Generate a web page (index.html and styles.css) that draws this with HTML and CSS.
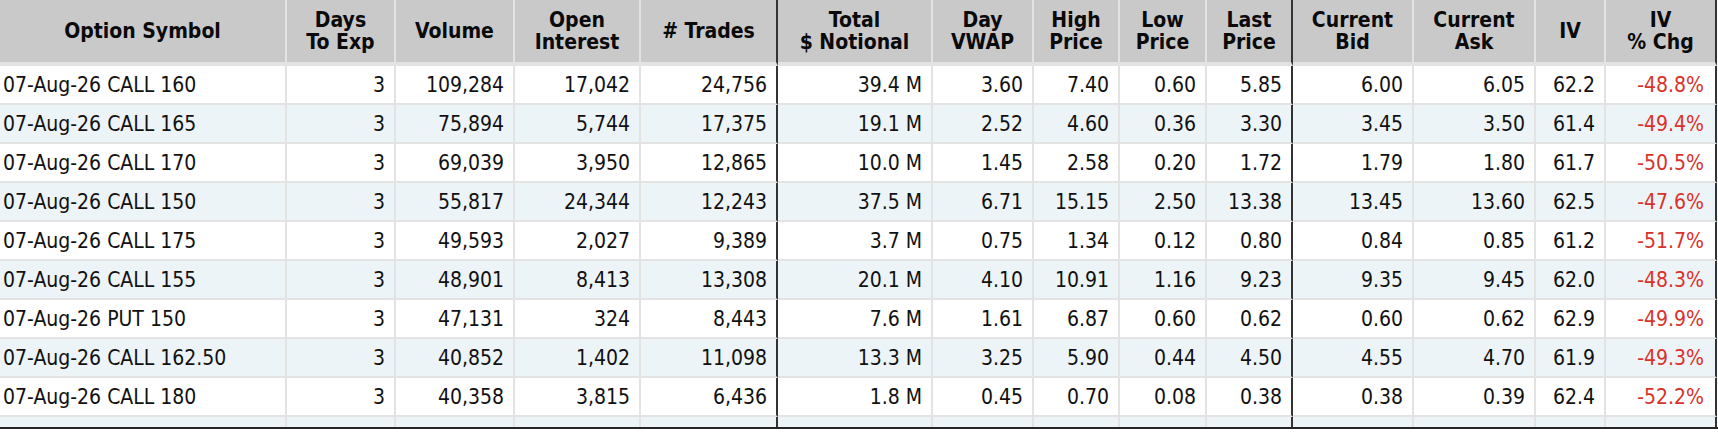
FILE: index.html
```html
<!DOCTYPE html>
<html lang="en">
<head>
<meta charset="utf-8">
<title>Option Activity</title>
<link rel="stylesheet" href="styles.css">
</head>
<body>
<div class="wrap">
<table class="opts">
<thead>
<tr>
<th class="c1">Option Symbol</th>
<th class="c2">Days<br>To Exp</th>
<th class="c3">Volume</th>
<th class="c4">Open<br>Interest</th>
<th class="c5 dk"># Trades</th>
<th class="c6">Total<br>$ Notional</th>
<th class="c7">Day<br>VWAP</th>
<th class="c8">High<br>Price</th>
<th class="c9">Low<br>Price</th>
<th class="c10 dk">Last<br>Price</th>
<th class="c11">Current<br>Bid</th>
<th class="c12">Current<br>Ask</th>
<th class="c13">IV</th>
<th class="c14 dk">IV<br>% Chg</th>
</tr>
</thead>
<tbody>
<tr><td class="sym">07-Aug-26 CALL 160</td><td>3</td><td>109,284</td><td>17,042</td><td class="dk">24,756</td><td>39.4 M</td><td>3.60</td><td>7.40</td><td>0.60</td><td class="dk">5.85</td><td>6.00</td><td>6.05</td><td>62.2</td><td class="dk neg">-48.8%</td></tr>
<tr><td class="sym">07-Aug-26 CALL 165</td><td>3</td><td>75,894</td><td>5,744</td><td class="dk">17,375</td><td>19.1 M</td><td>2.52</td><td>4.60</td><td>0.36</td><td class="dk">3.30</td><td>3.45</td><td>3.50</td><td>61.4</td><td class="dk neg">-49.4%</td></tr>
<tr><td class="sym">07-Aug-26 CALL 170</td><td>3</td><td>69,039</td><td>3,950</td><td class="dk">12,865</td><td>10.0 M</td><td>1.45</td><td>2.58</td><td>0.20</td><td class="dk">1.72</td><td>1.79</td><td>1.80</td><td>61.7</td><td class="dk neg">-50.5%</td></tr>
<tr><td class="sym">07-Aug-26 CALL 150</td><td>3</td><td>55,817</td><td>24,344</td><td class="dk">12,243</td><td>37.5 M</td><td>6.71</td><td>15.15</td><td>2.50</td><td class="dk">13.38</td><td>13.45</td><td>13.60</td><td>62.5</td><td class="dk neg">-47.6%</td></tr>
<tr><td class="sym">07-Aug-26 CALL 175</td><td>3</td><td>49,593</td><td>2,027</td><td class="dk">9,389</td><td>3.7 M</td><td>0.75</td><td>1.34</td><td>0.12</td><td class="dk">0.80</td><td>0.84</td><td>0.85</td><td>61.2</td><td class="dk neg">-51.7%</td></tr>
<tr><td class="sym">07-Aug-26 CALL 155</td><td>3</td><td>48,901</td><td>8,413</td><td class="dk">13,308</td><td>20.1 M</td><td>4.10</td><td>10.91</td><td>1.16</td><td class="dk">9.23</td><td>9.35</td><td>9.45</td><td>62.0</td><td class="dk neg">-48.3%</td></tr>
<tr><td class="sym">07-Aug-26 PUT 150</td><td>3</td><td>47,131</td><td>324</td><td class="dk">8,443</td><td>7.6 M</td><td>1.61</td><td>6.87</td><td>0.60</td><td class="dk">0.62</td><td>0.60</td><td>0.62</td><td>62.9</td><td class="dk neg">-49.9%</td></tr>
<tr><td class="sym">07-Aug-26 CALL 162.50</td><td>3</td><td>40,852</td><td>1,402</td><td class="dk">11,098</td><td>13.3 M</td><td>3.25</td><td>5.90</td><td>0.44</td><td class="dk">4.50</td><td>4.55</td><td>4.70</td><td>61.9</td><td class="dk neg">-49.3%</td></tr>
<tr><td class="sym">07-Aug-26 CALL 180</td><td>3</td><td>40,358</td><td>3,815</td><td class="dk">6,436</td><td>1.8 M</td><td>0.45</td><td>0.70</td><td>0.08</td><td class="dk">0.38</td><td>0.38</td><td>0.39</td><td>62.4</td><td class="dk neg">-52.2%</td></tr>
<tr><td class="sym"></td><td></td><td></td><td></td><td class="dk"></td><td></td><td></td><td></td><td></td><td class="dk"></td><td></td><td></td><td></td><td class="dk"></td></tr>
</tbody>
</table>
</div>
</body>
</html>
```
FILE: styles.css
```css
html, body {
  margin: 0;
  padding: 0;
  background: #ffffff;
}

body {
  font-family: "DejaVu Sans Condensed", "DejaVu Sans", sans-serif;
  font-stretch: condensed;
  font-size: 21px;
  color: #111111;
}

.wrap {
  height: 427px;
  overflow: hidden;
  border-bottom: 2px solid #262626;
}

.opts {
  table-layout: fixed;
  width: 1717px;
  border-collapse: separate;
  border-spacing: 0;
}

.opts th,
.opts td {
  box-sizing: border-box;
  border-right: 2px solid #e3e3e3;
  border-bottom: 2px solid #e3e3e3;
  white-space: nowrap;
  overflow: hidden;
}

.opts th {
  height: 66px;
  background: #c9c9c9;
  border-bottom-width: 4px;
  font-weight: bold;
  line-height: 22px;
  text-align: center;
  vertical-align: middle;
  padding: 0 2px;
  color: #0a0a0a;
}

.opts td {
  height: 39px;
  padding: 0 9px 0 3px;
  text-align: right;
  vertical-align: middle;
  line-height: 24px;
}

.opts td.sym {
  text-align: left;
  padding-left: 3px;
}

.opts tbody tr:nth-child(even) td {
  background: #edf4f7;
}

.opts tbody tr:nth-child(odd) td {
  background: #ffffff;
}

.opts .dk {
  border-right-color: #333333;
}

.opts td.neg {
  color: #d9322a;
  padding-right: 11px;
}

.c1 { width: 287px; }
.c2 { width: 109px; }
.c3 { width: 119px; }
.c4 { width: 126px; }
.c5 { width: 137px; }
.c6 { width: 155px; }
.c7 { width: 101px; }
.c8 { width: 86px; }
.c9 { width: 87px; }
.c10 { width: 86px; }
.c11 { width: 121px; }
.c12 { width: 122px; }
.c13 { width: 70px; }
.c14 { width: 111px; }
```
